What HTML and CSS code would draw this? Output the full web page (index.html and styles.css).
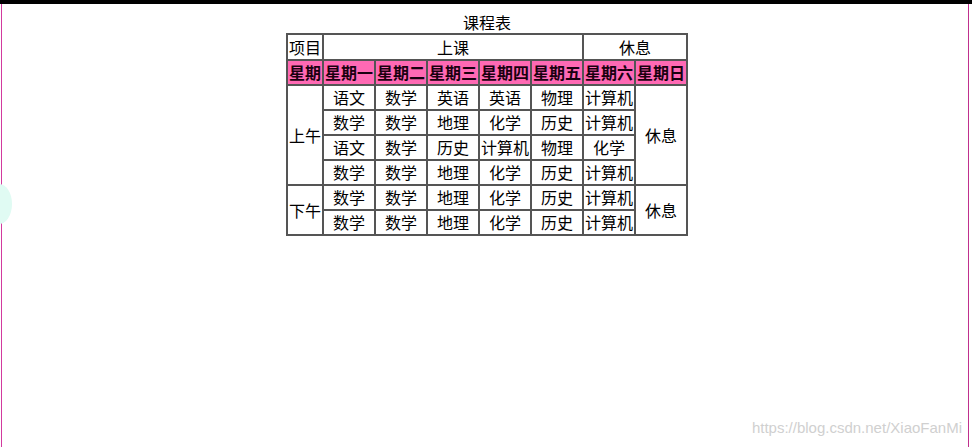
FILE: index.html
```html
<!DOCTYPE html>
<html>
<head>
<meta charset="utf-8">
<link rel="stylesheet" href="styles.css">
</head>
<body>
<div class="topbar"></div>
<div class="edge-left"></div>
<div class="edge-right"></div>
<div class="blob"></div>
<main class="page">
  <table class="schedule">
    <caption>课程表</caption>
    <tr class="head">
      <td>项目</td>
      <td colspan="5">上课</td>
      <td colspan="2">休息</td>
    </tr>
    <tr class="week">
      <th>星期</th><th>星期一</th><th>星期二</th><th>星期三</th><th>星期四</th><th>星期五</th><th>星期六</th><th>星期日</th>
    </tr>
    <tr>
      <td rowspan="4">上午</td>
      <td>语文</td><td>数学</td><td>英语</td><td>英语</td><td>物理</td><td>计算机</td>
      <td rowspan="4">休息</td>
    </tr>
    <tr><td>数学</td><td>数学</td><td>地理</td><td>化学</td><td>历史</td><td>计算机</td></tr>
    <tr><td>语文</td><td>数学</td><td>历史</td><td>计算机</td><td>物理</td><td>化学</td></tr>
    <tr><td>数学</td><td>数学</td><td>地理</td><td>化学</td><td>历史</td><td>计算机</td></tr>
    <tr>
      <td rowspan="2">下午</td>
      <td>数学</td><td>数学</td><td>地理</td><td>化学</td><td>历史</td><td>计算机</td>
      <td rowspan="2">休息</td>
    </tr>
    <tr><td>数学</td><td>数学</td><td>地理</td><td>化学</td><td>历史</td><td>计算机</td></tr>
  </table>
</main>
<div class="watermark">https://blog.csdn.net/XiaoFanMi</div>
</body>
</html>
```

FILE: styles.css
```css
html, body {
  margin: 0;
  padding: 0;
  background: #fff;
}
body {
  width: 972px;
  height: 447px;
  position: relative;
  overflow: hidden;
  font-family: "Noto Sans CJK SC", "Noto Sans", sans-serif;
  color: #000;
}
.topbar {
  height: 4px;
  background: #000;
}
.edge-left {
  position: absolute;
  left: 1px;
  top: 4px;
  bottom: 0;
  width: 1px;
  background: #d23a9e;
}
.edge-right {
  position: absolute;
  left: 968px;
  top: 4px;
  bottom: 0;
  width: 1px;
  background: #c0308e;
}
.blob {
  position: absolute;
  left: -14px;
  top: 184px;
  width: 26px;
  height: 40px;
  border-radius: 50%;
  background: #e0fbf3;
}
.page {
  display: flex;
  justify-content: center;
  padding-top: 8px;
  padding-left: 2px;
}
.schedule {
  border-collapse: separate;
  border-spacing: 0;
  border: 1px solid #555;
  font-size: 16px;
}
.schedule caption {
  line-height: 21px;
  font-size: 16px;
  text-align: center;
}
.schedule td,
.schedule th {
  border: 1px solid #555;
  padding: 1px;
  text-align: center;
  vertical-align: middle;
  line-height: 21px;
  white-space: nowrap;
}
.schedule td {
  min-width: 48px;
}
.schedule tr > :first-child {
  min-width: 32px;
  width: 32px;
}
.schedule .head td {
  line-height: 22px;
}
.schedule .week th {
  background: #ff69b4;
  font-weight: bold;
  color: #1a0010;
  line-height: 21px;
}
.watermark {
  position: absolute;
  right: 10px;
  top: 419px;
  font-family: "Liberation Sans", Arial, sans-serif;
  font-size: 15px;
  color: #d0d0d0;
  line-height: 18px;
}
```
